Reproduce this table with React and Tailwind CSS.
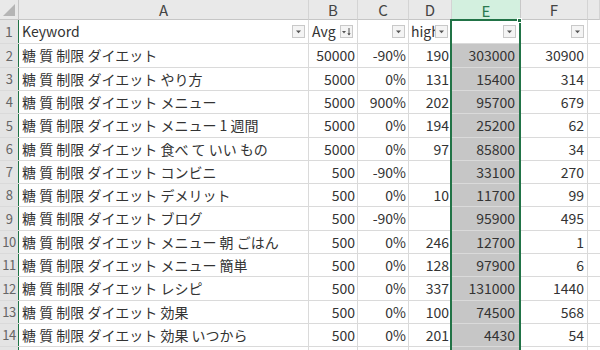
import React from "react";

const FONT = "font-['Noto_Sans_CJK_JP','Noto_Sans',sans-serif]";

// column widths include each cell's 1px right gridline
const COLS = [
  { key: "A", w: "w-[290px]" },
  { key: "B", w: "w-[49px]" },
  { key: "C", w: "w-[51px]" },
  { key: "D", w: "w-[43px]" },
  { key: "E", w: "w-[69px]" },
  { key: "F", w: "w-[67px]" },
  { key: "G", w: "w-[12px]" },
];

const ROWS = [
  ["糖 質 制限 ダイエット", "50000", "-90%", "190", "303000", "30900"],
  ["糖 質 制限 ダイエット やり方", "5000", "0%", "131", "15400", "314"],
  ["糖 質 制限 ダイエット メニュー", "5000", "900%", "202", "95700", "679"],
  ["糖 質 制限 ダイエット メニュー 1 週間", "5000", "0%", "194", "25200", "62"],
  ["糖 質 制限 ダイエット 食べ て いい もの", "5000", "0%", "97", "85800", "34"],
  ["糖 質 制限 ダイエット コンビニ", "500", "-90%", "", "33100", "270"],
  ["糖 質 制限 ダイエット デメリット", "500", "0%", "10", "11700", "99"],
  ["糖 質 制限 ダイエット ブログ", "500", "-90%", "", "95900", "495"],
  ["糖 質 制限 ダイエット メニュー 朝 ごはん", "500", "0%", "246", "12700", "1"],
  ["糖 質 制限 ダイエット メニュー 簡単", "500", "0%", "128", "97900", "6"],
  ["糖 質 制限 ダイエット レシピ", "500", "0%", "337", "131000", "1440"],
  ["糖 質 制限 ダイエット 効果", "500", "0%", "100", "74500", "568"],
  ["糖 質 制限 ダイエット 効果 いつから", "500", "0%", "201", "4430", "54"],
];

// heights of rows 1..14, keeping the 23.3px rhythm on whole pixels
const TALL = [false, true, false, false, true, false, false, false, true, false, false, true, false, false];

function FilterButton({ sorted }) {
  return (
    <div className="shrink-0 w-[13px] h-[13px] border border-[#c9c9c9] bg-[#f4f4f4] flex items-center justify-center">
      {sorted ? (
        <svg width="11" height="11" viewBox="0 0 11 11">
          <polygon points="1,5 5,5 3,7.5" fill="#555" />
          <path d="M8 2 V9" stroke="#555" strokeWidth="1" />
          <polygon points="6.3,7.2 9.7,7.2 8,9.6" fill="#555" />
        </svg>
      ) : (
        <svg width="9" height="9" viewBox="0 0 9 9">
          <polygon points="2,3.5 7,3.5 4.5,6.2" fill="#555" />
        </svg>
      )}
    </div>
  );
}

function ColumnHeader({ col }) {
  const active = col.key === "E";
  return (
    <div
      className={
        active
          ? `${col.w} shrink-0 h-full flex items-center justify-center leading-none border-r border-[#c8c8c8] bg-[#d3f0df] text-[#2b7a4f] text-[15px]`
          : `${col.w} shrink-0 h-full flex items-center justify-center leading-none border-r border-[#d4d4d4] bg-[#e9e9e9] text-[#444] text-[15px] border-b border-b-[#c6c6c6]`
      }
    >
      {col.key === "G" ? "" : col.key}
    </div>
  );
}

function HeaderRow() {
  return (
    <div className="flex h-[24px] border-b border-[#dadada] text-[14px] text-[#333]">
      <div className="w-[19px] shrink-0 bg-[#e4e4e4] border-r border-[#217346] flex items-center justify-center text-[#666]">
        1
      </div>
      <div className="w-[290px] shrink-0 border-r border-[#dadada] flex items-center pl-[3px] pr-[3px] gap-1">
        <span className="flex-1">Keyword</span>
        <FilterButton />
      </div>
      <div className="w-[49px] shrink-0 border-r border-[#dadada] flex items-center pl-[3px] pr-[4px] gap-1">
        <span className="flex-1">Avg</span>
        <FilterButton sorted />
      </div>
      <div className="w-[51px] shrink-0 border-r border-[#dadada] flex items-center justify-end pr-[3px]">
        <FilterButton />
      </div>
      <div className="w-[43px] shrink-0 border-r border-[#dadada] flex items-center pl-[2px] pr-[3px]">
        <span className="flex-1 overflow-hidden whitespace-nowrap">high</span>
        <FilterButton />
      </div>
      <div className="w-[69px] shrink-0 border-r border-[#dadada] flex items-center justify-end pr-[4px] bg-white">
        <FilterButton />
      </div>
      <div className="w-[67px] shrink-0 border-r border-[#dadada] flex items-center justify-end pr-[3px]">
        <FilterButton />
      </div>
      <div className="w-[12px] shrink-0" />
    </div>
  );
}

function DataRow({ n, cells, tall }) {
  const h = tall ? "h-[24px]" : "h-[23px]";
  return (
    <div className={`flex ${h} border-b border-[#dadada] text-[14px] text-[#333] whitespace-nowrap`}>
      <div className="w-[19px] shrink-0 bg-[#e4e4e4] border-r border-[#217346] flex items-center justify-center text-[#666] text-[13px] tracking-[-0.5px]">
        {n}
      </div>
      <div className="w-[290px] shrink-0 border-r border-[#dadada] flex items-center pl-[3px] overflow-hidden">
        {cells[0]}
      </div>
      <div className="w-[49px] shrink-0 border-r border-[#dadada] flex items-center justify-end pr-[2px]">
        {cells[1]}
      </div>
      <div className="w-[51px] shrink-0 border-r border-[#dadada] flex items-center justify-end pr-[2px]">
        {cells[2]}
      </div>
      <div className="w-[43px] shrink-0 border-r border-[#dadada] flex items-center justify-end pr-[2px]">
        {cells[3]}
      </div>
      <div className="w-[69px] shrink-0 border-r border-[#bdbdbd] border-b-[#bdbdbd] flex items-center justify-end pr-[5px] bg-[#c6c6c6]">
        {cells[4]}
      </div>
      <div className="w-[67px] shrink-0 border-r border-[#dadada] flex items-center justify-end pr-[3px]">
        {cells[5]}
      </div>
      <div className="w-[12px] shrink-0" />
    </div>
  );
}

export default function App() {
  return (
    <div className={`relative w-[600px] h-[350px] overflow-hidden bg-white ${FONT}`}>
      {/* column letters */}
      <div className="flex h-[20px]">
        <div className="w-[19px] shrink-0 h-full bg-[#e9e9e9] border-r border-b border-[#c6c6c6] flex items-end justify-end">
          <svg width="18" height="19" viewBox="0 0 18 19">
            <polygon points="15,4 15,16 3,16" fill="#b5b5b5" />
          </svg>
        </div>
        {COLS.map((c) => (
          <ColumnHeader key={c.key} col={c} />
        ))}
      </div>

      <HeaderRow />
      {ROWS.map((r, i) => (
        <DataRow key={i} n={i + 2} cells={r} tall={TALL[i + 1]} />
      ))}
      {/* row 15, cut off by the window edge */}
      <div className="flex h-[10px]">
        <div className="w-[19px] shrink-0 bg-[#e4e4e4] border-r border-[#217346]" />
        <div className="w-[290px] shrink-0 border-r border-[#dadada]" />
        <div className="w-[49px] shrink-0 border-r border-[#dadada]" />
        <div className="w-[51px] shrink-0 border-r border-[#dadada]" />
        <div className="w-[43px] shrink-0 border-r border-[#dadada]" />
        <div className="w-[69px] shrink-0 border-r border-[#bdbdbd] bg-[#c6c6c6]" />
        <div className="w-[67px] shrink-0 border-r border-[#dadada]" />
      </div>

      {/* selection outline around column E */}
      <div className="absolute left-[450px] top-[19px] w-[71px] h-[340px] border-2 border-[#217346] pointer-events-none" />
      <div className="absolute left-[517px] top-[18px] w-[5px] h-[5px] bg-[#217346] border border-white" />
    </div>
  );
}
